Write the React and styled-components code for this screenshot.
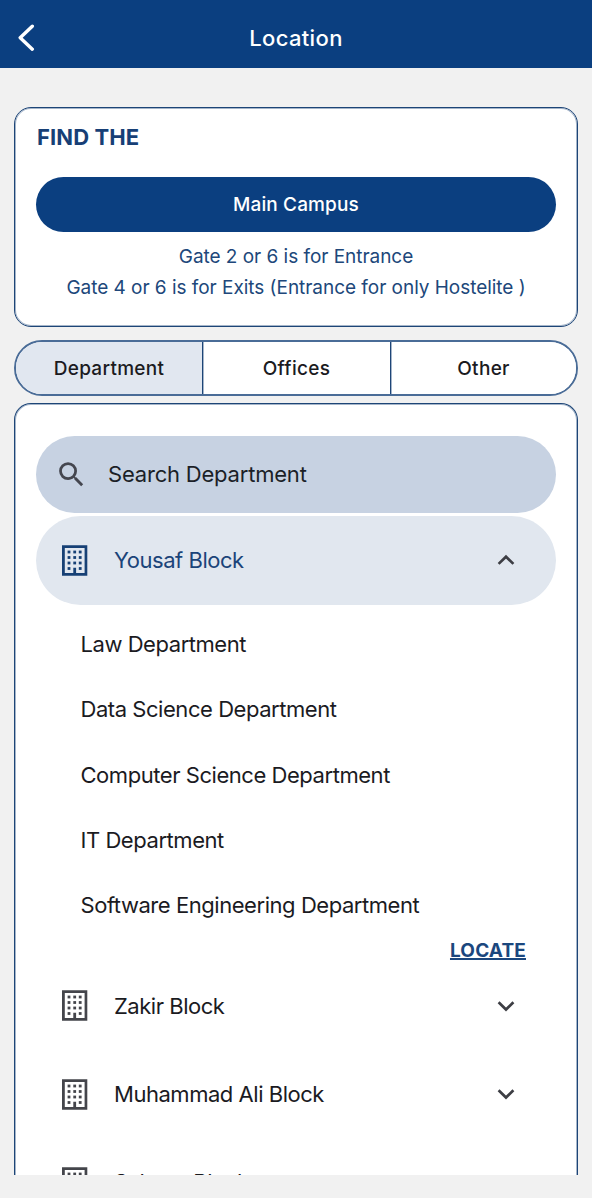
import React from "react";
import styled, { createGlobalStyle } from "styled-components";

const NAVY = "#0b3f80";
const LINE = "#1d4577";
const LINE_SOFT = "rgba(29, 69, 119, 0.4)";

const GlobalStyle = createGlobalStyle`
  *, *::before, *::after { box-sizing: border-box; }
  body {
    margin: 0;
    background: #f1f1f1;
    font-family: Inter, "Liberation Sans", sans-serif;
    color: #1b1b1f;
  }
  button { font: inherit; color: inherit; border: 0; background: none; padding: 0; }
`;

const Screen = styled.div`
  height: 1198px;
  display: flex;
  flex-direction: column;
  overflow: hidden;
`;

const Header = styled.header`
  height: 68px;
  flex: none;
  display: grid;
  grid-template-columns: 60px 1fr 60px;
  align-items: center;
  padding-top: 7px;
  background: ${NAVY};
  color: #fff;
`;

const BackButton = styled.button`
  display: flex;
  padding-left: 17px;
`;

const Title = styled.h1`
  margin: 0;
  text-align: center;
  font-size: 22px;
  line-height: 28px;
  font-weight: 500;
  letter-spacing: 0.35px;
`;

const Content = styled.main`
  flex: none;
  height: 1107px;
  padding: 39px 14px 0;
  display: flex;
  flex-direction: column;
  overflow: hidden;
`;

const Card = styled.section`
  background: #fff;
  border: 1px solid ${LINE};
  box-shadow: inset 0 0 0 1px ${LINE_SOFT};
  border-radius: 17px;
  padding: 0 21px;
`;

const CampusCard = styled(Card)`
  height: 220px;
  flex: none;
  color: #20477a;
`;

const Heading = styled.h2`
  margin: 15px 0 0 1px;
  font-size: 22px;
  line-height: 28px;
  font-weight: 700;
  letter-spacing: 0.1px;
  color: #173f76;
`;

const CampusButton = styled.button`
  display: block;
  width: 100%;
  height: 55px;
  margin: 26px 0 10px;
  border-radius: 28px;
  background: ${NAVY};
  color: #fff;
  font-size: 19px;
  font-weight: 500;
  letter-spacing: 0.13px;
`;

const Note = styled.p`
  margin: 0;
  text-align: center;
  font-size: 19px;
  line-height: 30.5px;
  letter-spacing: -0.035px;
  white-space: nowrap;
`;

const Tabs = styled.nav`
  flex: none;
  height: 56px;
  margin: 13px 0 7px;
  display: grid;
  grid-template-columns: 186px 188px 1fr;
  border: 2px solid #4a6c97;
  border-radius: 28px;
  overflow: hidden;
  background: #fff;
`;

const Tab = styled.button`
  font-size: 19px;
  font-weight: 500;
  letter-spacing: 0.3px;
  background: ${(p) => (p.$active ? "#e1e7f0" : "#fff")};
  & + & {
    border-left: 1px solid ${LINE};
    box-shadow: inset 1px 0 0 ${LINE_SOFT};
  }
`;

const ListCard = styled(Card)`
  flex: 1 0 auto;
  border-bottom: 0;
  border-radius: 17px 17px 0 0;
  padding-top: 32px;
`;

const Search = styled.label`
  display: flex;
  align-items: center;
  height: 77px;
  padding: 0 0 1px 19px;
  margin-bottom: 3px;
  border-radius: 39px;
  background: #c7d2e2;
  color: #44464f;
`;

const SearchText = styled.span`
  margin-left: 20px;
  color: #1b1f27;
  font-size: 22px;
  letter-spacing: -0.2px;
`;

const BlockRow = styled.button`
  display: flex;
  align-items: center;
  width: 100%;
  height: 88.5px;
  padding: 0 41px 0 21px;
  border-radius: 45px;
  background: ${(p) => (p.$open ? "#e1e7ef" : "transparent")};
  color: ${(p) => (p.$open ? "#1b4479" : "#1b1b1f")};
  text-align: left;
`;

const BlockIconBox = styled.span`
  display: flex;
  color: ${(p) => (p.$open ? "#164075" : "#44454b")};
`;

const BlockName = styled.span`
  flex: 1;
  margin-left: 22px;
  padding-bottom: ${(p) => (p.$raised ? 1 : 0)}px;
  font-size: 22px;
  line-height: 30px;
  letter-spacing: -0.47px;
`;

const Departments = styled.ul`
  list-style: none;
  margin: 0;
  padding: 6.6px 0 0 44.5px;
`;

const Department = styled.li`
  height: 65.4px;
  display: flex;
  align-items: center;
  font-size: 22px;
  letter-spacing: -0.45px;
`;

const LocateRow = styled.div`
  display: flex;
  justify-content: flex-end;
  height: 26px;
  padding-right: 30px;
  margin: 0.4px 0 -3px;
`;

const Locate = styled.button`
  height: 26px;
  font-size: 19px;
  line-height: 26px;
  font-weight: 700;
  letter-spacing: 0.15px;
  color: #1b477e;
  text-decoration: underline;
  text-decoration-thickness: 2px;
  text-underline-offset: 1px;
  text-decoration-skip-ink: none;
`;

const BackIcon = () => (
  <svg width="18" height="28" viewBox="0 0 18 28" fill="none" stroke="currentColor" strokeWidth="3.4" strokeLinecap="round" strokeLinejoin="round">
    <path d="M15.3 2.2L3.2 13.7l12.1 11.5" />
  </svg>
);

const SearchIcon = () => (
  <svg width="33" height="33" viewBox="0 0 24 24" fill="currentColor">
    <path d="M15.5 14h-.79l-.28-.27A6.47 6.47 0 0 0 16 9.5 6.5 6.5 0 1 0 9.5 16c1.61 0 3.09-.59 4.23-1.57l.27.28v.79l5 4.99L20.49 19l-4.99-5zm-6 0A4.5 4.5 0 1 1 14 9.5 4.5 4.5 0 0 1 9.5 14z" />
  </svg>
);

const windows = [6.8, 12.3, 17.8, 23.3];

const BuildingIcon = () => (
  <svg width="35" height="35" viewBox="0 0 35 35" fill="currentColor">
    <path fillRule="evenodd" d="M5 2.3h25.3v30.4H5zM7.8 5v25h8.5v-5.3h2.8V30h8.5V5z" />
    {windows.map((y) =>
      [10.6, 16.3, 21.8].map((x) =>
        y > 20 && x === 16.3 ? null : <rect key={x + "-" + y} x={x} y={y + 0.8} width="2.8" height="2.8" />
      )
    )}
  </svg>
);

const Chevron = ({ up }) => (
  <svg width="18" height="12" viewBox="0 0 18 12" fill="none" stroke="#3d3e44" strokeWidth="2.7">
    <path d={up ? "M1.6 9.9L9 2.7l7.4 7.2" : "M1.6 2.3L9 9.5l7.4-7.2"} />
  </svg>
);

const Block = ({ name, open, raised }) => (
  <BlockRow $open={open}>
    <BlockIconBox $open={open}><BuildingIcon /></BlockIconBox>
    <BlockName $raised={raised}>{name}</BlockName>
    <Chevron up={open} />
  </BlockRow>
);

const departments = [
  "Law Department",
  "Data Science Department",
  "Computer Science Department",
  "IT Department",
  "Software Engineering Department",
];

export default function App() {
  return (
    <Screen>
      <GlobalStyle />
      <Header>
        <BackButton aria-label="Back"><BackIcon /></BackButton>
        <Title>Location</Title>
      </Header>
      <Content>
        <CampusCard>
          <Heading>FIND THE</Heading>
          <CampusButton>Main Campus</CampusButton>
          <Note>Gate 2 or 6 is for Entrance</Note>
          <Note>Gate 4 or 6 is for Exits (Entrance for only Hostelite )</Note>
        </CampusCard>
        <Tabs>
          <Tab $active>Department</Tab>
          <Tab>Offices</Tab>
          <Tab>Other</Tab>
        </Tabs>
        <ListCard>
          <Search>
            <SearchIcon />
            <SearchText>Search Department</SearchText>
          </Search>
          <Block name="Yousaf Block" open />
          <Departments>
            {departments.map((d) => <Department key={d}>{d}</Department>)}
          </Departments>
          <LocateRow><Locate>LOCATE</Locate></LocateRow>
          <Block name="Zakir Block" />
          <Block name="Muhammad Ali Block" />
          <Block name="Salman Block" raised />
        </ListCard>
      </Content>
    </Screen>
  );
}
